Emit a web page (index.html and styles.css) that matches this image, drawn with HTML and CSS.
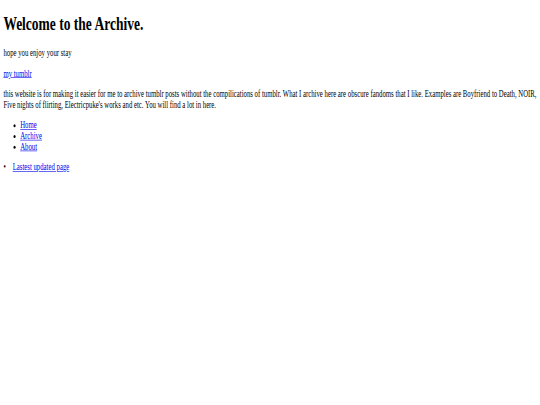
FILE: index.html
```html
<!DOCTYPE html>
<html lang="en">
<head>
  <meta charset="UTF-8">
  <meta name="viewport" content="width=device-width, initial-scale=1.0">
  <title>Welcome to the Archive</title>
  <link rel="stylesheet" href="styles.css">
</head>
<body>
  <div class="screen">
    <div class="page">
      <h1>Welcome to the Archive.</h1>
      <p>hope you enjoy your stay</p>
      <p><a href="#">my tumblr</a></p>
      <p>this website is for making it easier for me to archive tumblr posts without the compilications of tumblr. What I archive here are obscure fandoms that I like. Examples are Boyfriend to Death, NOIR, Five nights of flirting, Electricpuke's works and etc. You will find a lot in here.</p>

      <ul class="nav">
        <li><a href="#">Home</a></li>
        <li><a href="#">Archive</a></li>
        <li><a href="#">About</a></li>
      </ul>

      <ul class="updates">
        <li><a href="#">Lastest updated page</a></li>
      </ul>
    </div>
  </div>
</body>
</html>
```

FILE: styles.css
```css
html, body {
  margin: 0;
  padding: 0;
  overflow: hidden;
  background-color: #fff;
}

.screen {
  display: flow-root;
  width: 1272px;
  transform: scale(0.421875, 0.6);
  transform-origin: 0 0;
}

.page {
  margin: 8px 0 8px 8px;
  font-family: "Liberation Serif", "Times New Roman", serif;
  font-size: 16px;
  color: #000;
}

a {
  color: #0000ee;
}

.updates {
  padding-left: 22px;
}

.updates li::marker {
  content: "\2022\00a0\00a0\00a0\00a0";
}
```
